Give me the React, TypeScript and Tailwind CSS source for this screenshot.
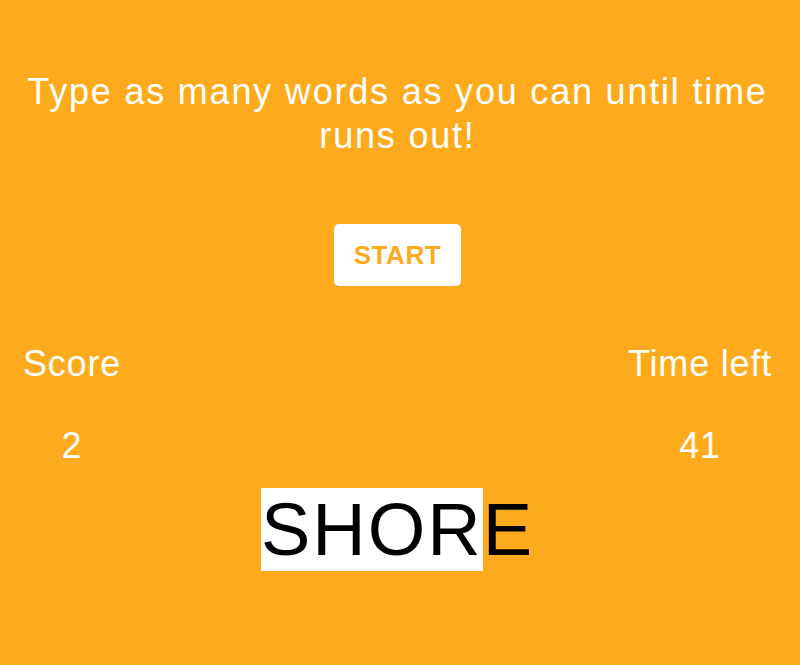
import React from "react";

export default function App() {
  const word = "SHORE";
  const typed = 4;

  return (
    <div className="w-full min-h-[665px] bg-[#fdab1d]">
      <div className="w-[795px] text-white font-['Liberation_Sans',Arial,sans-serif] flex flex-col items-center pt-[70px]">
        {/* Instructions */}
        <h1 className="text-[36px] leading-[44px] tracking-[1.8px] text-center">
          Type as many words as you can until time runs out!
        </h1>

        <button className="mt-[66px] w-[127px] h-[62px] bg-white rounded-[5px] text-[#fdab1d] text-[26px] font-bold tracking-[0.6px] flex items-center justify-center">
          START
        </button>

        {/* Stats */}
        <div className="w-full flex justify-between mt-[56px] px-[23px] text-[36px] leading-[44px] tracking-[0.8px]">
          <div className="flex flex-col items-center">
            <span>Score</span>
            <span className="mt-[38px]">2</span>
          </div>
          <div className="flex flex-col items-center">
            <span>Time left</span>
            <span className="mt-[38px]">41</span>
          </div>
        </div>

        {/* Current word */}
        <div className="mt-[21px] text-black text-[74px] leading-[82px] tracking-[2px]">
          <span className="bg-white">{word.slice(0, typed)}</span>
          <span>{word.slice(typed)}</span>
        </div>
      </div>
    </div>
  );
}
